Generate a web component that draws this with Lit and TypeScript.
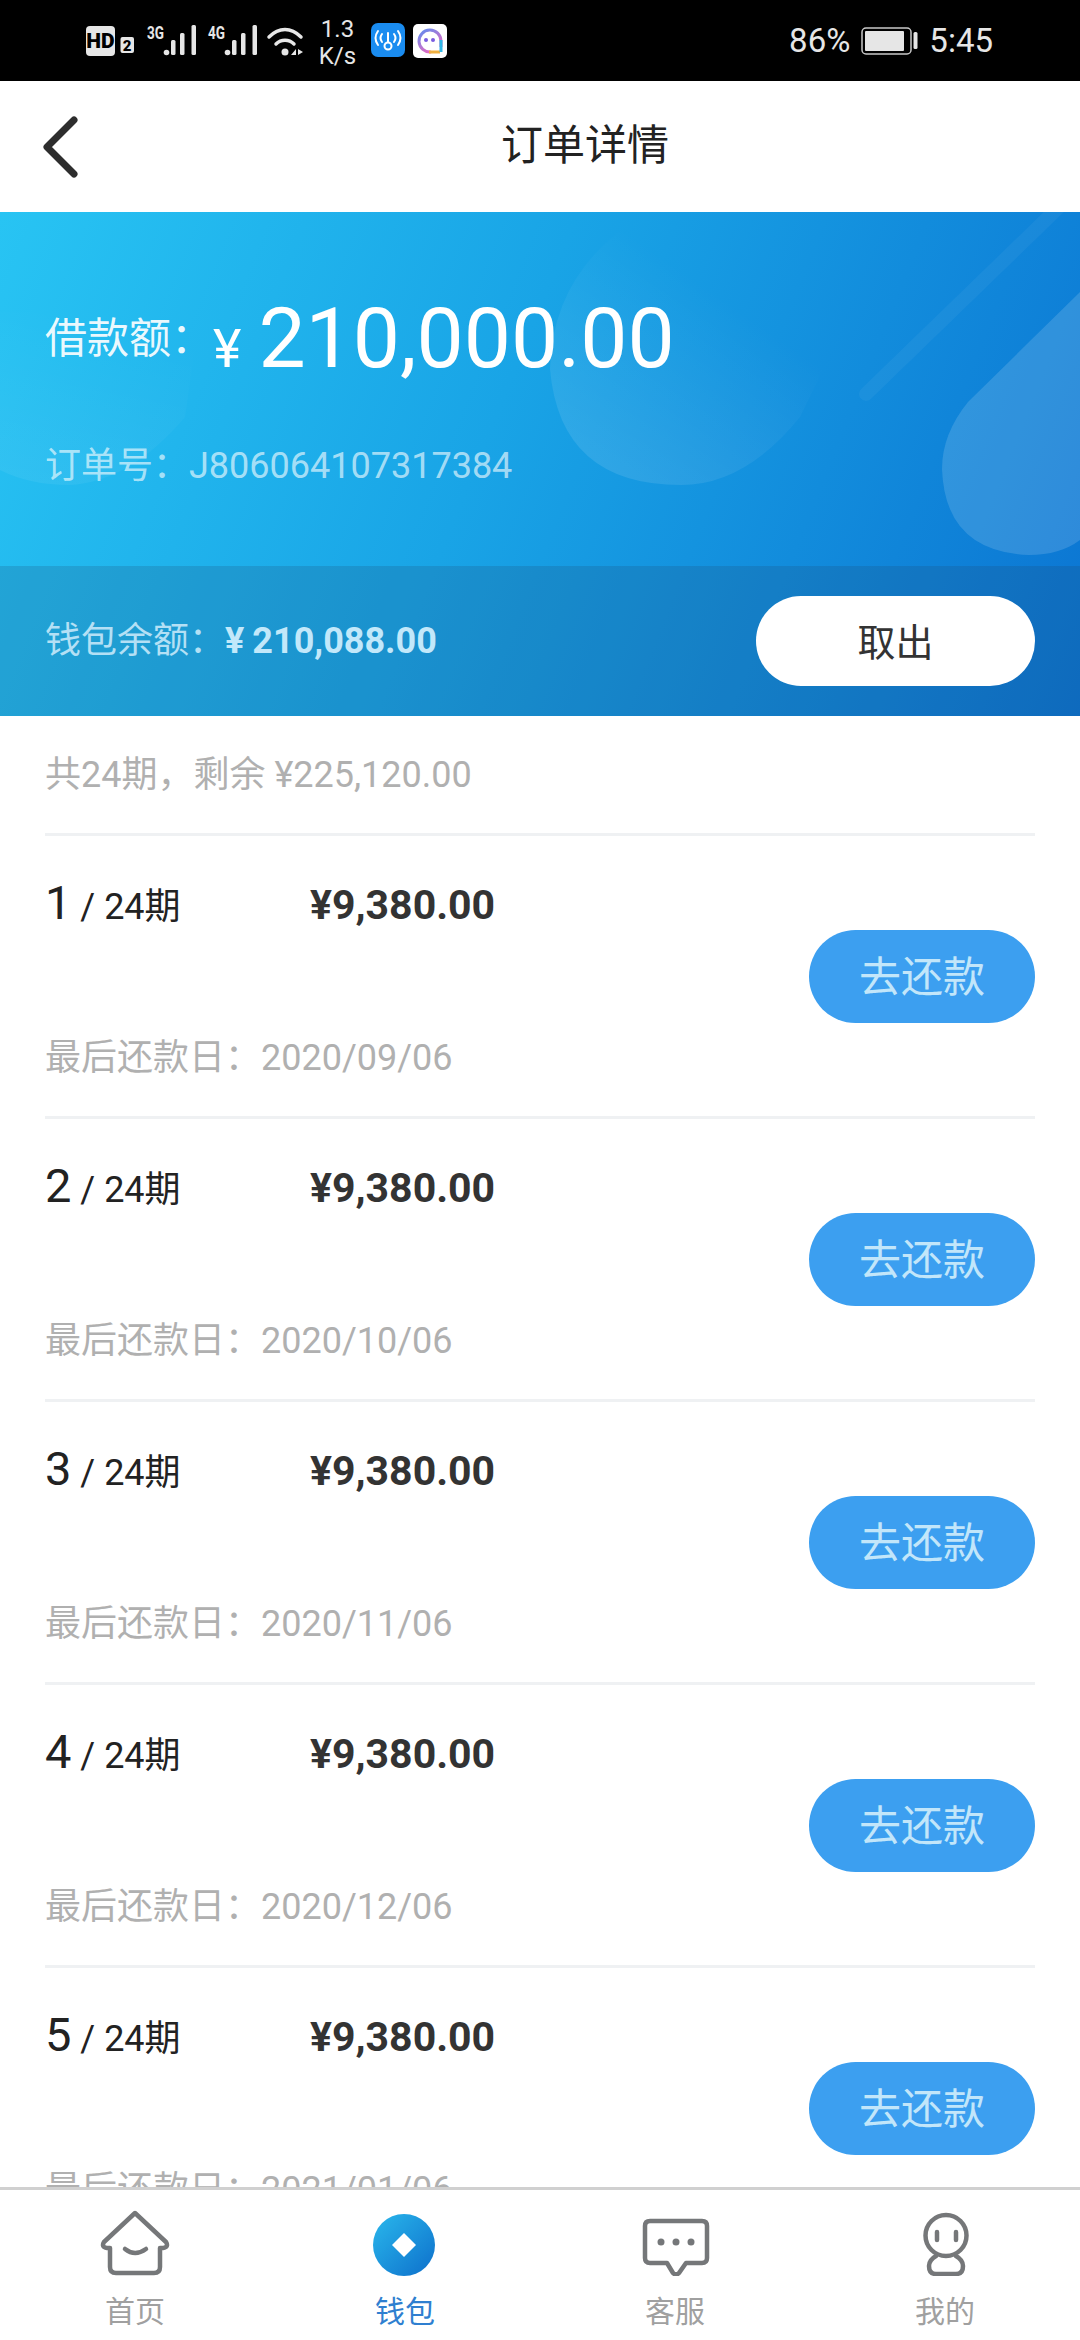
import { LitElement, html, css, svg } from "lit";
import { customElement } from "lit/decorators.js";

const installments = [
  { no: 1, due: "2020/09/06" },
  { no: 2, due: "2020/10/06" },
  { no: 3, due: "2020/11/06" },
  { no: 4, due: "2020/12/06" },
  { no: 5, due: "2021/01/06" },
];

// x is the left edge of the signal dot, bars sit at fixed offsets from it
const signal = (x: number) => svg`
  <circle cx=${x + 2.5} cy="52.500" r="2.800" fill="#e6e6e6"></circle>
  <rect x=${x + 7} y="40" width="4.500" height="15" rx="1.500" fill="#e6e6e6"></rect>
  <rect x=${x + 16} y="33" width="4.500" height="22" rx="1.500" fill="#e6e6e6"></rect>
  <rect x=${x + 27.5} y="25" width="4.500" height="30" rx="1.500" fill="#e6e6e6"></rect>
`;

@customElement("app-root")
export class AppRoot extends LitElement {
  static styles = css`
    :host {
      display: flex;
      flex-direction: column;
      width: 1080px;
      height: 2340px;
      overflow: hidden;
      background: #fff;
      font-family: Roboto, "Noto Sans CJK SC", sans-serif;
    }

    .status {
      flex: none;
      height: 81px;
      background: #000;
      display: flex;
      align-items: center;
      justify-content: space-between;
      color: #e6e6e6;
    }

    .status-left {
      display: block;
      margin-left: 86px;
    }

    .status-right {
      display: flex;
      align-items: center;
      margin-right: 87px;
      font-size: 33px;
    }

    .battery {
      margin: 0 11px;
    }

    .nav {
      flex: none;
      height: 131px;
      display: grid;
      grid-template-columns: 1fr auto 1fr;
      align-items: center;
      color: #222;
    }

    .nav svg {
      margin-left: 42px;
      display: block;
    }

    .nav h1 {
      margin: 0 0 11px;
      font-size: 42px;
      font-weight: 400;
      transform: translateX(45px);
    }

    .hero {
      flex: none;
      position: relative;
      height: 504px;
      overflow: hidden;
      background: linear-gradient(112deg, #28c4f3 0%, #19a4e6 45%, #0b74d2 100%);
      color: #fff;
    }

    .shapes {
      position: absolute;
      inset: 0;
    }

    .hero-top {
      position: relative;
      height: 354px;
      box-sizing: border-box;
      padding: 39px 45px 0;
    }

    .amount-line {
      display: flex;
      align-items: baseline;
      height: 176px;
      line-height: 176px;
    }

    .amount-label {
      font-size: 42px;
      color: rgba(255, 255, 255, 0.92);
      transform: translateY(-14px);
    }

    .currency {
      font-size: 54px;
      margin-right: 17px;
    }

    .amount {
      font-size: 84px;
    }

    .order {
      margin-top: 15px;
      font-size: 36px;
      line-height: 48px;
      color: rgba(255, 255, 255, 0.62);
    }

    .wallet {
      position: relative;
      height: 150px;
      box-sizing: border-box;
      padding: 0 45px;
      display: flex;
      align-items: center;
      justify-content: space-between;
      background: rgba(30, 70, 110, 0.2);
      color: #b4e0f5;
      font-size: 36px;
    }

    .balance {
      display: flex;
      align-items: baseline;
      padding-bottom: 8px;
    }

    .balance b {
      font-weight: 700;
      font-size: 36px;
      color: #c2e8fa;
    }

    .balance .yen {
      margin-right: 8px;
    }

    .withdraw {
      width: 279px;
      height: 90px;
      box-sizing: border-box;
      padding-bottom: 4px;
      border-radius: 45px;
      background: #fff;
      color: #333;
      font-size: 38px;
      display: flex;
      align-items: center;
      justify-content: center;
    }

    .list {
      flex: 1;
      min-height: 0;
      overflow: hidden;
      padding: 0 45px;
    }

    .summary {
      height: 120px;
      box-sizing: border-box;
      padding-top: 35px;
      font-size: 36px;
      line-height: 48px;
      color: #b0b0b0;
      border-bottom: 3px solid #eff1f3;
    }

    .row {
      height: 283px;
      box-sizing: border-box;
      padding-top: 39px;
      border-bottom: 3px solid #eff1f3;
    }

    .row:last-child {
      border-bottom: none;
    }

    .row-head {
      display: flex;
      align-items: baseline;
      line-height: 56px;
      color: #222;
    }

    .period {
      width: 265px;
      font-size: 36px;
    }

    .period span {
      font-size: 47px;
    }

    .money {
      font-size: 41px;
      font-weight: 700;
      color: #333;
    }

    .row-body {
      display: flex;
      justify-content: flex-end;
      margin-top: -5px;
    }

    .pay {
      width: 226px;
      height: 93px;
      box-sizing: border-box;
      padding-bottom: 7px;
      border-radius: 47px;
      background: #3c9ff0;
      color: #c2e6fa;
      font-size: 42px;
      display: flex;
      align-items: center;
      justify-content: center;
    }

    .due {
      margin-top: 11px;
      font-size: 36px;
      line-height: 48px;
      color: #b0b0b0;
    }

    .tabs {
      flex: none;
      position: relative;
      height: 153px;
      box-sizing: border-box;
      border-top: 3px solid #d0d0d0;
      background: #fff;
      display: grid;
      grid-template-columns: repeat(4, 1fr);
    }

    .tab {
      display: flex;
      flex-direction: column;
      align-items: center;
      font-size: 30px;
      color: #a0a0a0;
      padding-top: 20px;
    }

    .tab svg {
      display: block;
      margin-bottom: 15px;
    }

    .tab span {
      line-height: 42px;
    }

    .tab.active {
      color: #2f7fd0;
    }
  `;

  private statusLeft() {
    return html`<svg class="status-left" width="370" height="66" viewBox="86 8 370 66" font-family="Roboto">
      <rect x="86" y="26" width="29" height="30" rx="4" fill="#e6e6e6"></rect>
      <text x="100.500" y="48" text-anchor="middle" font-size="21" font-weight="900" fill="#000">HD</text>
      <rect x="120.500" y="37" width="13.500" height="16" rx="2" fill="#e6e6e6"></rect>
      <text x="127.200" y="50.500" text-anchor="middle" font-size="15" font-weight="900" fill="#000">2</text>
      <text x="147" y="38.500" font-size="18" font-weight="700" fill="#e6e6e6" textLength="17" lengthAdjust="spacingAndGlyphs">3G</text>
      ${signal(164)}
      <text x="208" y="38.500" font-size="18" font-weight="700" fill="#e6e6e6" textLength="17" lengthAdjust="spacingAndGlyphs">4G</text>
      ${signal(225)}
      <path d="M269 37 C279 27 291 27 301 37" fill="none" stroke="#e6e6e6" stroke-width="3.500" stroke-linecap="round"></path>
      <path d="M276 44 C281 39 289 39 294 44" fill="none" stroke="#e6e6e6" stroke-width="3.500" stroke-linecap="round"></path>
      <circle cx="285" cy="52" r="3.500" fill="#e6e6e6"></circle>
      <path d="M291 55 L296 49 V55 Z M298 49 L303 52 L298 55 Z" fill="#e6e6e6"></path>
      <text x="337.500" y="37" text-anchor="middle" font-size="24" fill="#e6e6e6">1.3</text>
      <text x="337.500" y="64" text-anchor="middle" font-size="24" fill="#e6e6e6">K/s</text>
      <rect x="371" y="23" width="34" height="34" rx="7" fill="#1a8cf0"></rect>
      <circle cx="388" cy="46" r="3.500" fill="none" stroke="#fff" stroke-width="2"></circle>
      <path d="M388 42 V33 M382 34 Q379 38 382 42 M394 34 Q397 38 394 42 M378 31 Q373 38 378 45 M398 31 Q403 38 398 45" fill="none" stroke="#fff" stroke-width="2" stroke-linecap="round"></path>
      <rect x="413" y="24" width="34" height="34" rx="5" fill="#fff"></rect>
      <defs><linearGradient id="q" x1="0" y1="0" x2="0.600" y2="1">
        <stop offset="0" stop-color="#5f8cf0"></stop><stop offset="1" stop-color="#e868c0"></stop>
      </linearGradient></defs>
      <path d="M431 52 A11 11 0 1 1 441 41 V47" fill="none" stroke="url(#q)" stroke-width="3"></path>
      <path d="M429 52 H440" stroke="#f0b040" stroke-width="3"></path>
      <path d="M441 40 V52" stroke="#30b8e8" stroke-width="3"></path>
      <circle cx="426" cy="40" r="2" fill="#7a5ce0"></circle>
      <circle cx="433" cy="40" r="2" fill="#7a5ce0"></circle>
    </svg>`;
  }

  private tabIcon(kind: string) {
    const c = "#757779";
    if (kind === "home")
      return html`<svg width="70" height="66" viewBox="0 0 70 66" fill="none" stroke=${c} stroke-width="4.500" stroke-linejoin="round" stroke-linecap="round">
        <path d="M35 3 L66 32 Q69 37 63 38 H60 V57 Q60 63 54 63 H16 Q10 63 10 57 V38 H7 Q1 37 4 32 Z"></path>
        <path d="M25 39 Q35 47 46 39"></path>
      </svg>`;
    if (kind === "wallet")
      return html`<svg width="70" height="66" viewBox="0 0 70 66">
        <defs><linearGradient id="w" x1="0" y1="0" x2="1" y2="1">
          <stop offset="0" stop-color="#2ab8ec"></stop><stop offset="1" stop-color="#0d6fcb"></stop>
        </linearGradient></defs>
        <circle cx="34" cy="35" r="31" fill="url(#w)"></circle>
        <path d="M34 23 L46 35 L34 47 L22 35 Z" fill="#fff"></path>
      </svg>`;
    if (kind === "service")
      return html`<svg width="70" height="66" viewBox="0 0 70 66" fill="none" stroke=${c} stroke-width="4.500" stroke-linejoin="round">
        <path d="M10 11 H62 Q67 11 67 16 V48 Q67 53 62 53 H46 L39 63 Q36 66 33 63 L27 53 H10 Q5 53 5 48 V16 Q5 11 10 11 Z"></path>
        <circle cx="21" cy="32" r="3.500" fill=${c} stroke="none"></circle>
        <circle cx="36" cy="32" r="3.500" fill=${c} stroke="none"></circle>
        <circle cx="51" cy="32" r="3.500" fill=${c} stroke="none"></circle>
      </svg>`;
    return html`<svg width="70" height="66" viewBox="0 0 70 66" fill="none" stroke=${c} stroke-width="4.500" stroke-linecap="round">
      <circle cx="36" cy="25.500" r="20.500"></circle>
      <path d="M27 22 V30 M46 22 V30"></path>
      <path d="M26 46 Q19 50 19 56 Q19 64 26 64 H46 Q53 64 53 56 Q53 50 46 46"></path>
    </svg>`;
  }

  render() {
    return html`
      <div class="status">
        ${this.statusLeft()}
        <div class="status-right">
          <span>86%</span>
          <svg class="battery" width="57" height="28" viewBox="0 0 57 28">
            <rect x="1" y="1" width="49" height="26" rx="4" fill="none" stroke="#c8c8c8" stroke-width="1.500"></rect>
            <rect x="4" y="4" width="39" height="20" rx="1" fill="#e6e6e6"></rect>
            <rect x="52.500" y="5" width="4" height="17" rx="1.500" fill="#e6e6e6"></rect>
          </svg>
          <span>5:45</span>
        </div>
      </div>

      <div class="nav">
        <svg width="38" height="62" viewBox="0 0 38 62" fill="none" stroke="#2d2d2d" stroke-width="7" stroke-linecap="round" stroke-linejoin="round">
          <path d="M32 4 L5 31 L32 58"></path>
        </svg>
        <h1>订单详情</h1>
        <span></span>
      </div>

      <div class="hero">
        <svg class="shapes" width="1080" height="504" viewBox="0 0 1080 504">
          <defs>
            <linearGradient id="fade-left" x1="0" y1="1" x2="0.300" y2="0">
              <stop offset="0" stop-color="#fff" stop-opacity="0.06"></stop>
              <stop offset="1" stop-color="#fff" stop-opacity="0"></stop>
            </linearGradient>
            <linearGradient id="fade-mid" x1="0" y1="1" x2="0.800" y2="0.100">
              <stop offset="0.100" stop-color="#fff" stop-opacity="0.11"></stop>
              <stop offset="0.700" stop-color="#fff" stop-opacity="0"></stop>
            </linearGradient>
          </defs>
          <path d="M0 258 Q30 273 69 273 Q130 270 185 205 L200 100 H0 Z" fill="url(#fade-left)"></path>
          <path d="M800 205 Q745 273 681 273 Q560 273 550 157 Q552 80 607 30 L640 0 H900 Z" fill="url(#fade-mid)"></path>
          <path d="M866 182 L1060 -6" stroke="#fff" stroke-opacity="0.045" stroke-width="14" stroke-linecap="round" fill="none"></path>
          <path d="M1080 80 L968 190 Q942 222 942 257 Q945 340 1029 343 Q1060 343 1080 328 Z" fill="rgba(255,255,255,0.14)"></path>
        </svg>
        <div class="hero-top">
          <div class="amount-line">
            <span class="amount-label">借款额\uFF1A</span>
            <span class="currency">¥</span>
            <span class="amount">210,000.00</span>
          </div>
          <div class="order">订单号\uFF1AJ806064107317384</div>
        </div>
        <div class="wallet">
          <div class="balance">
            <span>钱包余额\uFF1A</span>
            <b class="yen">¥</b>
            <b>210,088.00</b>
          </div>
          <div class="withdraw">取出</div>
        </div>
      </div>

      <div class="list">
        <div class="summary">共24期\uFF0C剩余 ¥225,120.00</div>
        ${installments.map(
          (item) => html`
            <div class="row">
              <div class="row-head">
                <div class="period"><span>${item.no}</span> / 24期</div>
                <div class="money">¥9,380.00</div>
              </div>
              <div class="row-body"><div class="pay">去还款</div></div>
              <div class="due">最后还款日\uFF1A${item.due}</div>
            </div>
          `,
        )}
      </div>

      <div class="tabs">
        <div class="tab">${this.tabIcon("home")}<span>首页</span></div>
        <div class="tab active">${this.tabIcon("wallet")}<span>钱包</span></div>
        <div class="tab">${this.tabIcon("service")}<span>客服</span></div>
        <div class="tab">${this.tabIcon("me")}<span>我的</span></div>
      </div>
    `;
  }
}
